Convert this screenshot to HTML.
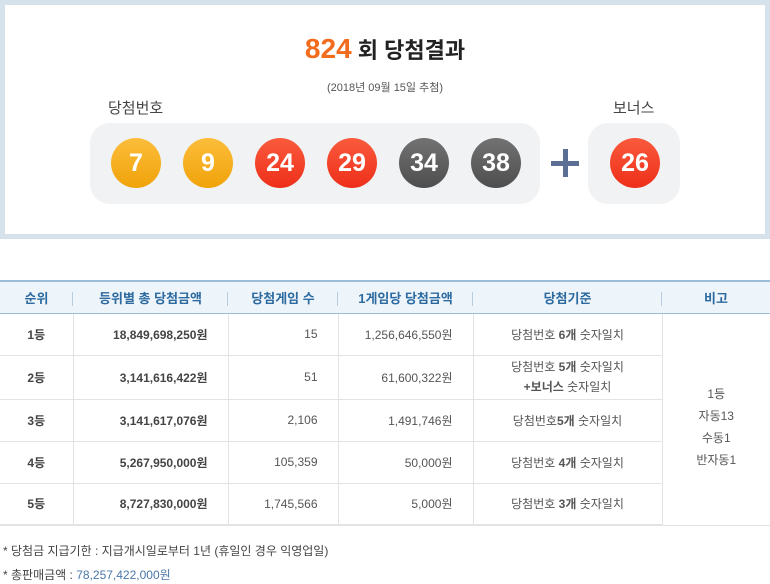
<!DOCTYPE html>
<html><head><meta charset="utf-8"><style>
*{margin:0;padding:0;box-sizing:border-box}
body{width:770px;height:584px;background:#fff;font-family:"Liberation Sans","Noto Sans CJK KR",sans-serif;color:#333;position:relative;overflow:hidden;font-size:12px}
.top{position:absolute;left:0;top:0;width:770px;height:239px;border:5px solid #d5e2ec;background:#fff}
.abs{position:absolute}
.title{left:0;width:770px;top:33px;text-align:center;font-size:22px;font-weight:bold;color:#222}
.title b{color:#f36b1c;font-size:28px;font-family:"Liberation Sans",sans-serif}
.date{left:0;width:770px;top:79px;text-align:center;font-size:11px;color:#555}
.lbl{font-size:15px;color:#444}
.gbox{background:#f1f2f4;border-radius:20px}
.ball{position:absolute;width:50px;height:50px;border-radius:50%;color:#fff;font-weight:bold;font-size:25px;text-align:center;line-height:50px;top:138px;font-family:"Liberation Sans Narrow","Liberation Sans",sans-serif}
.y{background:linear-gradient(#fcbd3a,#f0a30a)}
.r{background:linear-gradient(#fa5a3c,#ee2f1a)}
.k{background:linear-gradient(#727272,#4e4e4e)}
table{position:absolute;left:0;top:280px;width:770px;border-collapse:collapse;font-size:12px}
th{background:#eef5fa;color:#2d6aa0;height:32px;border-top:2px solid #9dbdd6;border-bottom:1px solid #9dbdd6;font-weight:bold;font-size:13px;position:relative}
td{border-bottom:1px solid #e3e3e3;border-left:1px solid #e3e3e3;color:#555;height:42px}
td:first-child{border-left:none;text-align:center;font-weight:bold;color:#444}
.rt{text-align:right;padding-right:20px}
.b{font-weight:bold;color:#444}
.c{text-align:center}
th span{position:absolute;right:0;top:10px;height:14px;border-right:1px solid #b8cde0}
.foot{left:3px;font-size:12px;color:#444}
</style></head><body>
<div class="top"></div>
<div class="abs title"><b>824</b> 회 당첨결과</div>
<div class="abs date">(2018년 09월 15일 추첨)</div>
<div class="abs lbl" style="left:108px;top:97px">당첨번호</div>
<div class="abs lbl" style="left:613px;top:97px">보너스</div>
<div class="abs gbox" style="left:90px;top:123px;width:450px;height:81px"></div>
<div class="abs gbox" style="left:588px;top:123px;width:92px;height:81px"></div>
<div class="ball y" style="left:111px">7</div>
<div class="ball y" style="left:183px">9</div>
<div class="ball r" style="left:255px">24</div>
<div class="ball r" style="left:327px">29</div>
<div class="ball k" style="left:399px">34</div>
<div class="ball k" style="left:471px">38</div>
<div class="ball r" style="left:610px">26</div>
<div class="abs" style="left:551px;top:161px;width:28px;height:5px;background:#5a6f93"></div>
<div class="abs" style="left:563px;top:149px;width:5px;height:28px;background:#5a6f93"></div>
<table>
<tr><th style="width:73px">순위<span></span></th><th style="width:155px">등위별 총 당첨금액<span></span></th><th style="width:110px">당첨게임 수<span></span></th><th style="width:135px">1게임당 당첨금액<span></span></th><th style="width:189px">당첨기준<span></span></th><th>비고</th></tr>
<tr><td>1등</td><td class="rt b">18,849,698,250원</td><td class="rt">15</td><td class="rt">1,256,646,550원</td><td class="c">당첨번호 <b>6개</b> 숫자일치</td><td rowspan="5" class="c" style="line-height:22px;padding-top:16px">1등<br>자동13<br>수동1<br>반자동1</td></tr>
<tr><td style="height:44px">2등</td><td class="rt b">3,141,616,422원</td><td class="rt">51</td><td class="rt">61,600,322원</td><td class="c" style="line-height:20px">당첨번호 <b>5개</b> 숫자일치<br><b>+보너스</b> 숫자일치</td></tr>
<tr><td style="height:40px">3등</td><td class="rt b">3,141,617,076원</td><td class="rt">2,106</td><td class="rt">1,491,746원</td><td class="c">당첨번호<b>5개</b> 숫자일치</td></tr>
<tr><td>4등</td><td class="rt b">5,267,950,000원</td><td class="rt">105,359</td><td class="rt">50,000원</td><td class="c">당첨번호 <b>4개</b> 숫자일치</td></tr>
<tr><td style="border-bottom:2px solid #e3e3e3">5등</td><td class="rt b" style="border-bottom:2px solid #e3e3e3">8,727,830,000원</td><td class="rt" style="border-bottom:2px solid #e3e3e3">1,745,566</td><td class="rt" style="border-bottom:2px solid #e3e3e3">5,000원</td><td class="c" style="border-bottom:2px solid #e3e3e3">당첨번호 <b>3개</b> 숫자일치</td></tr>
</table>
<div class="abs foot" style="top:542px">* 당첨금 지급기한 : 지급개시일로부터 1년 (휴일인 경우 익영업일)</div>
<div class="abs foot" style="top:566px">* 총판매금액 : <span style="color:#4a78a8">78,257,422,000원</span></div>
</body></html>
